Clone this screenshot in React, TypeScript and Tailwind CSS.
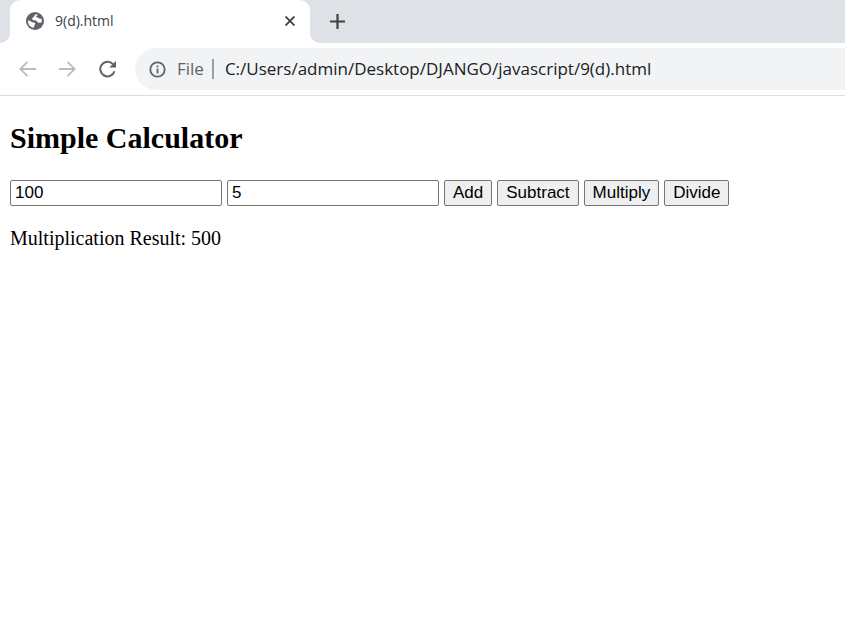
import { useState } from "react";

function GlobeIcon() {
  return (
    <svg viewBox="0 0 18 18" className="size-[18px]">
      <circle cx="9" cy="9" r="9" fill="#5f6368" />
      <path
        fill="#fff"
        d="M11.200 2.200C9.500 2.200 8.500 2.800 8.400 3.800c0 .8-.5 1.100-1.300 1.500C6 5.900 5.800 8 7.300 8.300c1 .2 2.200-.1 3 .5.900.7 1.200 1.900 2.400 2 1.100.1 2.200-.2 3-.9a7 7 0 0 0-.4-3.700c-.8.7-2.200.7-2.600-.1-.3-.7-1.300-.500-2.100-.8-.8-.4-.5-1.200.2-1.500.7-.3 1-.9.400-1.600ZM2 8.500c1.300-.1 2.500.3 3.300 1.200.7.8 2 .5 3 .9 1.100.5 1.200 1.800.4 2.400-.7.500-.4 1.100-.6 1.800-.1.500-.5.900-1 1A7 7 0 0 1 2 8.500Z"
      />
    </svg>
  );
}

function InfoIcon() {
  return (
    <svg viewBox="0 0 17 17" className="size-[17px] fill-none stroke-[#5f6368]" strokeWidth="1.8">
      <circle cx="8.5" cy="8.5" r="7.2" />
      <path d="M8.5 7.5V12.5M8.5 4.500V6.300" />
    </svg>
  );
}

function BrowserTabs() {
  return (
    <div className="flex h-[43px]">
      <div className="w-2.5 rounded-br-[10px] bg-[#dee1e6]" />
      <div className="w-[300px] bg-linear-to-b from-[#dee1e6] from-50% to-white to-50%">
        <div className="flex h-[42px] items-center rounded-t-[10px] bg-white pr-3 pl-4">
          <GlobeIcon />
          <span className="ml-[11px] flex-1 text-[14px] leading-5 text-[#3c4043]">9(d).html</span>
          <button aria-label="Close tab" className="flex size-4 items-center justify-center">
            <svg viewBox="0 0 10 10" className="size-2.5 stroke-[#3c4043]" strokeWidth="1.8">
              <path d="M0.5 0.5 9.5 9.5M9.5 0.5 0.5 9.5" />
            </svg>
          </button>
        </div>
      </div>
      <div className="flex flex-1 items-center rounded-bl-[10px] bg-[#dee1e6] pl-5">
        <button aria-label="New tab">
          <svg viewBox="0 0 15 15" className="size-[15px] stroke-[#3c4043]" strokeWidth="2.2">
            <path d="M7.5 0V15M0 7.5H15" />
          </svg>
        </button>
      </div>
    </div>
  );
}

function Toolbar() {
  return (
    <div className="flex h-[53px] items-center border-b border-[#dadce0] pl-[19px]">
      <button aria-label="Back" className="text-[#babcbe]">
        <svg viewBox="0 0 17 16" className="h-4 w-[17px] fill-none stroke-current" strokeWidth="1.8">
          <path d="M17 8H1.5M8.5 0.8 1.3 8l7.2 7.2" />
        </svg>
      </button>
      <button aria-label="Forward" className="ml-[23px] text-[#babcbe]">
        <svg viewBox="0 0 17 16" className="h-4 w-[17px] fill-none stroke-current" strokeWidth="1.8">
          <path d="M0 8h15.5M8.5 0.8 15.7 8l-7.2 7.2" />
        </svg>
      </button>
      <button aria-label="Reload" className="ml-[22px] text-[#5f6368]">
        <svg viewBox="0 0 19 18" className="h-[18px] w-[19px] fill-none stroke-current" strokeWidth="2">
          <path d="M15 4.2A7.300 7.300 0 1 0 16.500 11.300" />
          <path d="M18 1V7.5H11.2Z" fill="currentColor" stroke="none" />
        </svg>
      </button>
      <div className="ml-[18px] flex h-[42px] min-w-0 flex-1 items-center rounded-l-full bg-[#f1f3f4] pl-3.5 text-[17px]">
        <InfoIcon />
        <span className="ml-[11px] text-[#5f6368]">File</span>
        <span className="ml-2 h-5 w-0.5 bg-[#9aa0a6]" />
        <input
          aria-label="Address"
          defaultValue="C:/Users/admin/Desktop/DJANGO/javascript/9(d).html"
          className="ml-[11px] min-w-0 flex-1 text-[#202124] outline-none"
        />
      </div>
    </div>
  );
}

const field =
  "h-[26px] w-[212px] rounded-[2px] border border-[#767676] bg-white px-1 outline-none";
const action = "h-[26px] rounded-[2px] border border-[#767676] bg-[#efefef] px-2";

export default function App() {
  const [a, setA] = useState("100");
  const [b, setB] = useState("5");
  const [result, setResult] = useState("Multiplication Result: 500");
  const x = Number(a);
  const y = Number(b);

  return (
    <div className="min-h-screen bg-white">
      <header className="font-['Open_Sans','Noto_Sans',sans-serif]">
        <BrowserTabs />
        <Toolbar />
      </header>
      <main className="px-2.5 pt-[25px] font-['Liberation_Serif',serif] text-[20px] text-black">
        <h2 className="text-[30px] leading-[34px] font-bold">Simple Calculator</h2>
        <div className="mt-[25px] flex flex-wrap gap-[5px] font-['Liberation_Sans',sans-serif] text-[17px] leading-[22px]">
          <input aria-label="First number" className={field} value={a} onChange={(e) => setA(e.target.value)} />
          <input aria-label="Second number" className={field} value={b} onChange={(e) => setB(e.target.value)} />
          <button className={action} onClick={() => setResult(`Addition Result: ${x + y}`)}>Add</button>
          <button className={action} onClick={() => setResult(`Subtraction Result: ${x - y}`)}>Subtract</button>
          <button className={action} onClick={() => setResult(`Multiplication Result: ${x * y}`)}>Multiply</button>
          <button className={action} onClick={() => setResult(`Division Result: ${x / y}`)}>Divide</button>
        </div>
        <p className="mt-5 leading-6">{result}</p>
      </main>
    </div>
  );
}
